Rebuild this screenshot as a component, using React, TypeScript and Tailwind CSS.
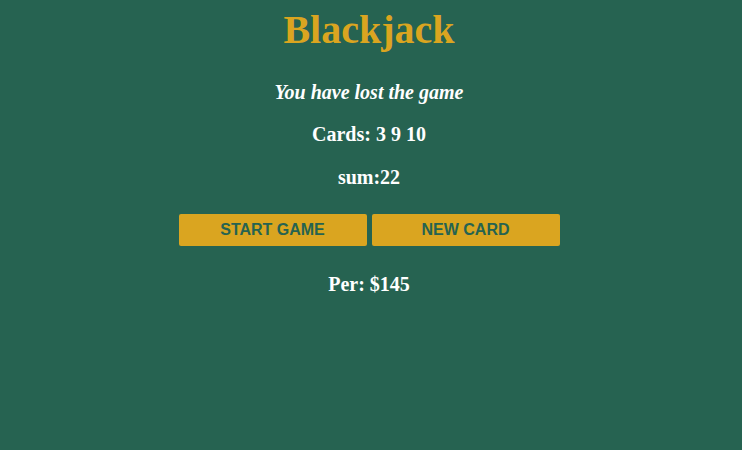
export default function App() {
  const serif = { fontFamily: '"Liberation Serif", "Times New Roman", serif' };
  return (
    <div className="min-h-[450px] w-full bg-[#266351] pr-[4px] text-center text-white font-bold" style={serif}>
      <h1 className="pt-[7px] text-[40px] leading-[46px] text-[#daa520]">Blackjack</h1>
      <p className="mt-[28px] text-[20px] leading-[23px] italic">You have lost the game</p>
      <p className="mt-[19px] text-[20px] leading-[23px]">Cards: 3 9 10</p>
      <p className="mt-[20px] text-[20px] leading-[23px]">sum:22</p>
      <div className="mt-[25px] flex justify-center gap-[5px]">
        <button
          className="h-[32px] w-[188px] rounded-[2px] bg-[#daa520] text-[16px] font-bold text-[#266351]"
          style={{ fontFamily: '"Liberation Sans", Arial, sans-serif' }}
        >
          START GAME
        </button>
        <button
          className="h-[32px] w-[188px] rounded-[2px] bg-[#daa520] text-[16px] font-bold text-[#266351]"
          style={{ fontFamily: '"Liberation Sans", Arial, sans-serif' }}
        >
          NEW CARD
        </button>
      </div>
      <p className="mt-[27px] text-[20px] leading-[23px]">Per: $145</p>
    </div>
  );
}
